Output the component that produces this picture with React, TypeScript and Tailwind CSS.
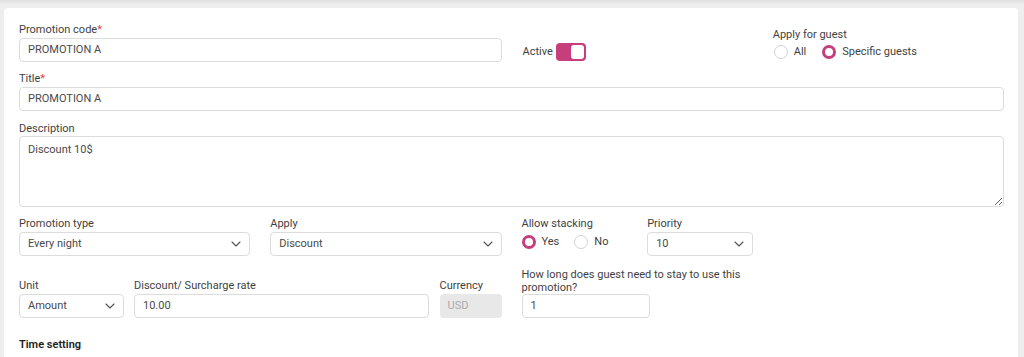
import React from "react";

function Chevron() {
  return (
    <svg width="10" height="6" viewBox="0 0 10 6" className="shrink-0">
      <polyline points="1,1 5,5 9,1" fill="none" stroke="#555" strokeWidth="1.1" strokeLinecap="round" strokeLinejoin="round" />
    </svg>
  );
}

function Label({ children, req, className = "mb-[1px]" }: { children: React.ReactNode; req?: boolean; className?: string }) {
  return (
    <div className={"text-[11px] leading-[14px] text-[#3f3f3f] " + className}>
      {children}
      {req && <span className="text-[#e53e3e]">*</span>}
    </div>
  );
}

function Input({ value, className = "" }: { value: string; className?: string }) {
  return (
    <div className={"h-[24px] border border-[#dcdcdc] rounded-[4px] bg-white px-[8px] flex items-center text-[11px] text-[#4a4a4a] " + className}>
      {value}
    </div>
  );
}

function Select({ value, className = "" }: { value: string; className?: string }) {
  return (
    <div className={"h-[24px] border border-[#dcdcdc] rounded-[4px] bg-white pl-[8px] pr-[8px] flex items-center justify-between text-[11px] text-[#4a4a4a] " + className}>
      <span>{value}</span>
      <Chevron />
    </div>
  );
}

function Radio({ checked, label }: { checked?: boolean; label: string }) {
  return (
    <div className="flex items-center gap-[6px]">
      {checked ? (
        <span className="w-[14px] h-[14px] rounded-full border-[3.5px] border-[#c73e7d] bg-white" />
      ) : (
        <span className="w-[14px] h-[14px] rounded-full border border-[#cfd3d8] bg-white" />
      )}
      <span className="text-[11px] text-[#3f3f3f]">{label}</span>
    </div>
  );
}

export default function App() {
  return (
    <div
      className="h-[357px] overflow-hidden bg-[#eeeeee] pt-[8px] pl-[4px] pr-[6px] shadow-[inset_0_5px_4px_-3px_rgba(0,0,0,0.07)]"
      style={{ fontFamily: "Roboto, 'Liberation Sans', sans-serif" }}
    >
      <div className="bg-white rounded-t-[4px] pl-[15px] pr-[14px] pt-[15px] pb-10 h-[400px]">
        {/* Row 1 */}
        <div className="grid grid-cols-4 gap-x-5">
          <div className="col-span-2">
            <Label req>Promotion code</Label>
            <Input value="PROMOTION A" />
          </div>
          <div className="self-end h-[24px] flex items-center gap-[3px] pl-[1px]">
            <span className="text-[11px] text-[#3f3f3f] mt-[4px]">Active</span>
            <span className="w-[30px] h-[18px] rounded-[4px] bg-[#c73e7d] flex items-center justify-end pr-[2px] mt-[4px]">
              <span className="w-[13px] h-[14px] rounded-[3px] bg-white" />
            </span>
          </div>
          <div className="self-end flex flex-col pb-[1px]">
            <div className="text-[11px] leading-[14px] text-[#3f3f3f] mb-[1px]">Apply for guest</div>
            <div className="h-[18px] flex items-center gap-[16px] pl-[1px]">
              <Radio label="All" />
              <Radio checked label="Specific guests" />
            </div>
          </div>
        </div>

        {/* Title */}
        <div className="mt-[10px]">
          <Label req>Title</Label>
          <Input value="PROMOTION A" />
        </div>

        {/* Description */}
        <div className="mt-[11px]">
          <Label className="mb-0">Description</Label>
          <textarea
            readOnly
            defaultValue="Discount 10$"
            className="block w-full h-[71px] border border-[#dcdcdc] rounded-[4px] px-[8px] py-[5px] text-[11px] text-[#4a4a4a] outline-none resize-y"
          />
        </div>

        {/* Row 4 */}
        <div className="grid grid-cols-4 gap-x-5 mt-[10px]">
          <div>
            <Label>Promotion type</Label>
            <Select value="Every night" />
          </div>
          <div>
            <Label>Apply</Label>
            <Select value="Discount" />
          </div>
          <div className="grid grid-cols-2 gap-x-5">
            <div>
              <Label>Allow stacking</Label>
              <div className="h-[14px] mt-[4px] flex items-center gap-[15px]">
                <Radio checked label="Yes" />
                <Radio label="No" />
              </div>
            </div>
            <div>
              <Label>Priority</Label>
              <Select value="10" />
            </div>
          </div>
        </div>

        {/* Row 5 */}
        <div className="grid grid-cols-4 gap-x-5 mt-[12px] items-end">
          <div className="col-span-2 flex gap-[10px]">
            <div className="w-[105px]">
              <Label>Unit</Label>
              <Select value="Amount" />
            </div>
            <div className="flex-1">
              <Label>Discount/ Surcharge rate</Label>
              <Input value="10.00" />
            </div>
            <div className="w-[63px] pl-[1px]">
              <Label>Currency</Label>
              <div className="h-[24px] rounded-[4px] bg-[#e8e8e8] px-[8px] flex items-center text-[11px] text-[#aaaaaa]">USD</div>
            </div>
          </div>
          <div>
            <div className="text-[11px] leading-[13px] text-[#3f3f3f] w-[240px]">
              How long does guest need to stay to use this promotion?
            </div>
            <Input value="1" className="w-[128px]" />
          </div>
        </div>

        {/* Time setting */}
        <div className="mt-[20px] text-[11px] leading-[14px] font-semibold text-[#222]">Time setting</div>
      </div>
    </div>
  );
}
